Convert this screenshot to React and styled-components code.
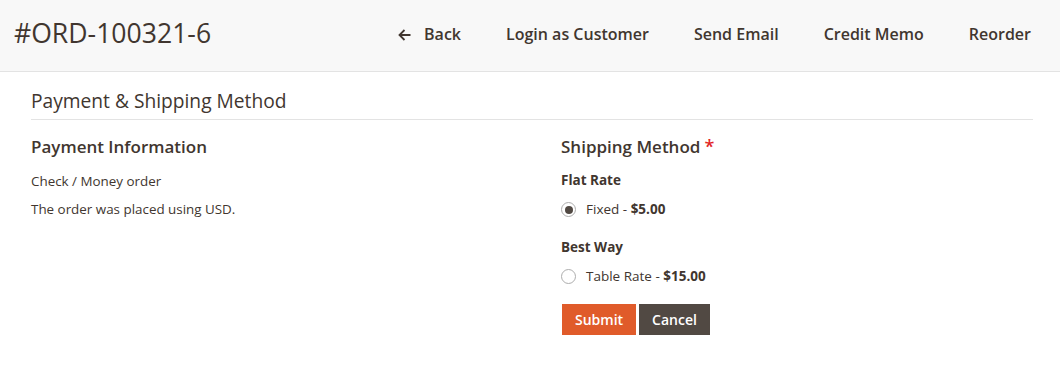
import React from "react";
import styled, { createGlobalStyle } from "styled-components";

const GlobalStyle = createGlobalStyle`
  html, body { margin: 0; padding: 0; background: #fff; }
  body {
    font-family: "Open Sans", "Liberation Sans", sans-serif;
    color: #41362f;
    font-size: 14px;
  }
  * { box-sizing: border-box; }
`;

const Header = styled.header`
  display: flex;
  align-items: center;
  justify-content: space-between;
  height: 72px;
  padding: 0 29px 4px 14px;
  background: #f8f8f8;
  border-bottom: 1px solid #e3e3e3;
`;

const PageTitle = styled.h1`
  margin: 0;
  font-size: 26.6px;
  font-weight: 400;
  line-height: 1.2;
  color: #41362f;
`;

const Actions = styled.nav`
  display: flex;
  align-items: center;
  gap: 45px;
  padding-top: 3px;
`;

const ActionButton = styled.button`
  display: inline-flex;
  align-items: center;
  gap: 13px;
  padding: 0;
  border: 0;
  background: none;
  font-family: inherit;
  font-size: 16px;
  font-weight: 600;
  color: #41362f;
  line-height: 1.2;
  cursor: pointer;
`;

const Content = styled.main`
  padding: 17px 27px 0 31px;
`;

const SectionTitle = styled.h2`
  margin: 0;
  padding-bottom: 6px;
  border-bottom: 1px solid #e3e3e3;
  font-size: 19.2px;
  font-weight: 400;
  line-height: 24px;
`;

const Columns = styled.div`
  display: grid;
  grid-template-columns: 1fr 1fr;
  column-gap: 58px;
`;

const Column = styled.section`
  display: flex;
  flex-direction: column;
  align-items: flex-start;
`;

const ItemTitle = styled.h3`
  margin: 17px 0 0;
  font-size: 17px;
  font-weight: 600;
  line-height: 1.2;
`;

const Required = styled.span`
  color: #e22626;
  margin-left: 4px;
  font-size: 18px;
  line-height: 1;
`;

const Text = styled.p`
  margin: ${(p) => (p.$first ? "14px" : "7px")} 0 0;
  font-size: 13.4px;
  line-height: 21px;
`;

const Carrier = styled.div`
  margin-top: ${(p) => (p.$first ? "13px" : "17px")};
  font-size: 13.5px;
  font-weight: 700;
  line-height: 21px;
`;

const Option = styled.label`
  display: flex;
  align-items: center;
  gap: 10px;
  margin-top: 8px;
  font-size: 13.5px;
  line-height: 21px;
  cursor: pointer;
  b { font-weight: 700; }
`;

const Radio = styled.input.attrs({ type: "radio" })`
  appearance: none;
  margin: 0;
  width: 15px;
  height: 15px;
  border: 1px solid #adadad;
  border-radius: 50%;
  background: #fff;
  display: grid;
  place-items: center;
  &:checked::after {
    content: "";
    width: 8px;
    height: 8px;
    border-radius: 50%;
    background: #514943;
  }
`;

const ButtonRow = styled.div`
  display: flex;
  gap: 3px;
  margin-top: 17px;
  margin-left: 1px;
`;

const FormButton = styled.button`
  height: 31px;
  padding: 0 12px;
  border: 1px solid ${(p) => (p.$primary ? "#e05b2a" : "#514943")};
  background: ${(p) => (p.$primary ? "#e05b2a" : "#514943")};
  color: #fff;
  font-family: inherit;
  font-size: 14px;
  font-weight: 600;
  cursor: pointer;
`;

const ArrowLeft = () => (
  <svg width="13" height="12" viewBox="0 0 13 12" fill="none" stroke="#41362f" strokeWidth="1.8">
    <path d="M12.5 6H1.5M6.5 1L1.5 6l5 5" />
  </svg>
);

export default function App() {
  return (
    <>
      <GlobalStyle />
      <Header>
        <PageTitle>#ORD-100321-6</PageTitle>
        <Actions>
          <ActionButton>
            <ArrowLeft />
            Back
          </ActionButton>
          <ActionButton>Login as Customer</ActionButton>
          <ActionButton>Send Email</ActionButton>
          <ActionButton>Credit Memo</ActionButton>
          <ActionButton>Reorder</ActionButton>
        </Actions>
      </Header>
      <Content>
        <SectionTitle>Payment &amp; Shipping Method</SectionTitle>
        <Columns>
          <Column>
            <ItemTitle>Payment Information</ItemTitle>
            <Text $first>Check / Money order</Text>
            <Text>The order was placed using USD.</Text>
          </Column>
          <Column>
            <ItemTitle>
              Shipping Method<Required>*</Required>
            </ItemTitle>
            <Carrier $first>Flat Rate</Carrier>
            <Option>
              <Radio name="shipping" defaultChecked />
              <span>
                Fixed - <b>$5.00</b>
              </span>
            </Option>
            <Carrier>Best Way</Carrier>
            <Option>
              <Radio name="shipping" />
              <span>
                Table Rate - <b>$15.00</b>
              </span>
            </Option>
            <ButtonRow>
              <FormButton $primary>Submit</FormButton>
              <FormButton>Cancel</FormButton>
            </ButtonRow>
          </Column>
        </Columns>
      </Content>
    </>
  );
}
